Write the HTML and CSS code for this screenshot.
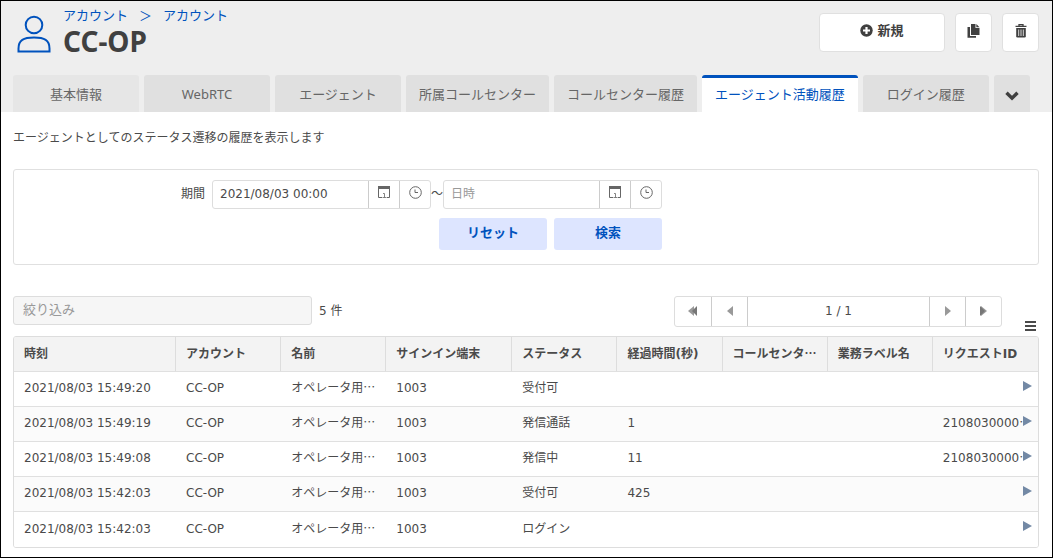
FILE: index.html
```html
<!DOCTYPE html>
<html lang="ja">
<head>
  <meta charset="UTF-8">
  <meta name="viewport" content="width=device-width, initial-scale=1.0">
  <title>CC-OP</title>
  <link rel="stylesheet" href="styles.css">
</head>
<body>
  <div class="page">
    <header class="header">
      <div class="header-top">
        <svg class="user-icon" width="34" height="38" viewBox="0 0 34 38" fill="none" stroke="currentColor" stroke-width="2">
          <circle cx="17" cy="10" r="8.3"/>
          <path d="M1.5 36.5 V33.5 C1.5 25 6.5 22.5 17 22.5 C27.5 22.5 32.5 25 32.5 33.5 V36.5 Z"/>
        </svg>
        <div class="heading">
          <nav class="breadcrumb">
            <a href="#">アカウント</a>
            <span class="separator">＞</span>
            <a href="#">アカウント</a>
          </nav>
          <h1>CC-OP</h1>
        </div>
        <div class="actions">
          <button class="action action-new">
            <svg width="13" height="13" viewBox="0 0 13 13">
              <circle cx="6.5" cy="6.5" r="6.2" fill="currentColor"/>
              <path d="M6.5 3 V10 M3 6.5 H10" stroke="#fff" stroke-width="2.2"/>
            </svg>
            新規
          </button>
          <button class="action" aria-label="複製">
            <svg width="13" height="14" viewBox="0 0 13 14" fill="currentColor">
              <path d="M4 0 H8.5 V4 H12.5 V11 H4 Z"/>
              <path d="M9.3 0 L12.5 3.2 H9.3 Z"/>
              <path d="M0.5 3 H3 V12 H9 V13.7 H0.5 Z"/>
            </svg>
          </button>
          <button class="action" aria-label="削除">
            <svg width="12" height="14" viewBox="0 0 12 14">
              <path d="M4 1.7 V0.6 H8 V1.7 M0.5 2.4 H11.5" fill="none" stroke="currentColor" stroke-width="1.3"/>
              <path d="M1.2 4 H10.8 V12.3 Q10.8 13.6 9.5 13.6 H2.5 Q1.2 13.6 1.2 12.3 Z" fill="currentColor"/>
              <path d="M3.7 5.5 V12 M6 5.5 V12 M8.3 5.5 V12" stroke="#fff" stroke-width="0.8"/>
            </svg>
          </button>
        </div>
      </div>

      <!-- Tabs -->
      <div class="tabs">
        <button class="tab tab-first">基本情報</button>
        <button class="tab">WebRTC</button>
        <button class="tab">エージェント</button>
        <button class="tab">所属コールセンター</button>
        <button class="tab">コールセンター履歴</button>
        <button class="tab active">エージェント活動履歴</button>
        <button class="tab">ログイン履歴</button>
        <button class="tab tab-more" aria-label="その他">
          <svg width="14" height="10" viewBox="0 0 14 10" fill="none" stroke="currentColor" stroke-width="3.4">
            <path d="M1.5 1.8 L7 7.2 L12.5 1.8"/>
          </svg>
        </button>
      </div>
    </header>

    <main class="content">
      <p class="description">エージェントとしてのステータス遷移の履歴を表示します</p>

      <form class="search-box">
        <div class="search-inner">
          <div class="period">
            <label for="from">期間</label>
            <div class="datetime">
              <input type="text" id="from" value="2021/08/03 00:00">
              <button type="button" aria-label="日付">
                <svg width="12" height="14" viewBox="0 0 12 14" fill="none" stroke="currentColor">
                  <path d="M0.5 1 V11.5 H4 M9 11.5 H11.5 V1"/>
                  <path d="M0 1.5 H12" stroke-width="3"/>
                  <path d="M5 7.5 H6.5 V11.5 M4.5 11.5 H8.5" stroke-width="0.8"/>
                </svg>
              </button>
              <button type="button" aria-label="時刻">
                <svg width="13" height="14" viewBox="0 0 13 14" fill="none" stroke="currentColor">
                  <circle cx="6.5" cy="6.5" r="5.8"/>
                  <path d="M6 3.5 V6.5 H9"/>
                </svg>
              </button>
            </div>
            <span class="tilde">～</span>
            <div class="datetime">
              <input type="text" placeholder="日時" aria-label="終了日時">
              <button type="button" aria-label="日付">
                <svg width="12" height="14" viewBox="0 0 12 14" fill="none" stroke="currentColor">
                  <path d="M0.5 1 V11.5 H4 M9 11.5 H11.5 V1"/>
                  <path d="M0 1.5 H12" stroke-width="3"/>
                  <path d="M5 7.5 H6.5 V11.5 M4.5 11.5 H8.5" stroke-width="0.8"/>
                </svg>
              </button>
              <button type="button" aria-label="時刻">
                <svg width="13" height="14" viewBox="0 0 13 14" fill="none" stroke="currentColor">
                  <circle cx="6.5" cy="6.5" r="5.8"/>
                  <path d="M6 3.5 V6.5 H9"/>
                </svg>
              </button>
            </div>
          </div>
          <div class="search-buttons">
            <button type="reset">リセット</button>
            <button type="button">検索</button>
          </div>
        </div>
      </form>

      <!-- Filter and pager -->
      <div class="toolbar">
        <input class="filter" type="text" placeholder="絞り込み" aria-label="絞り込み">
        <span class="count">5 件</span>
        <div class="pager">
          <button aria-label="最初">
            <svg width="10" height="10" viewBox="0 0 10 10"><path d="M6 0 V10 L0 5 Z" fill="#999"/><path d="M9 0 V10 L4 5 Z" fill="#777"/></svg>
          </button>
          <button aria-label="前へ">
            <svg width="6" height="10" viewBox="0 0 6 10"><path d="M6 0 V10 L0 5 Z" fill="#999"/></svg>
          </button>
          <span class="pager-page">1 / 1</span>
          <button aria-label="次へ">
            <svg width="6" height="10" viewBox="0 0 6 10"><path d="M0 0 V10 L6 5 Z" fill="#999"/></svg>
          </button>
          <button aria-label="最後">
            <svg width="10" height="10" viewBox="0 0 10 10"><path d="M2 0 V10 L8 5 Z" fill="#999"/><path d="M1 0 V10 L6 5 Z" fill="#777"/></svg>
          </button>
        </div>
        <button class="menu" aria-label="メニュー">
          <svg width="11" height="10" viewBox="0 0 11 10" stroke="currentColor" stroke-width="2">
            <path d="M0 1 H11 M0 5 H11 M0 9 H11"/>
          </svg>
        </button>
      </div>

      <div class="table-wrap">
        <table class="history">
          <thead>
            <tr>
              <th class="col-time">時刻</th>
              <th>アカウント</th>
              <th>名前</th>
              <th class="col-terminal">サインイン端末</th>
              <th>ステータス</th>
              <th>経過時間(秒)</th>
              <th>コールセンタ<span class="dots">…</span></th>
              <th>業務ラベル名</th>
              <th>リクエストID</th>
            </tr>
          </thead>
          <tbody>
            <tr>
              <td>2021/08/03 15:49:20</td>
              <td>CC-OP</td>
              <td>オペレータ用<span class="dots">…</span></td>
              <td>1003</td>
              <td>受付可</td>
              <td></td>
              <td></td>
              <td></td>
              <td><button class="detail" aria-label="詳細"></button></td>
            </tr>
            <tr>
              <td>2021/08/03 15:49:19</td>
              <td>CC-OP</td>
              <td>オペレータ用<span class="dots">…</span></td>
              <td>1003</td>
              <td>発信通話</td>
              <td>1</td>
              <td></td>
              <td></td>
              <td>2108030000<span class="dots">…</span><button class="detail" aria-label="詳細"></button></td>
            </tr>
            <tr>
              <td>2021/08/03 15:49:08</td>
              <td>CC-OP</td>
              <td>オペレータ用<span class="dots">…</span></td>
              <td>1003</td>
              <td>発信中</td>
              <td>11</td>
              <td></td>
              <td></td>
              <td>2108030000<span class="dots">…</span><button class="detail" aria-label="詳細"></button></td>
            </tr>
            <tr>
              <td>2021/08/03 15:42:03</td>
              <td>CC-OP</td>
              <td>オペレータ用<span class="dots">…</span></td>
              <td>1003</td>
              <td>受付可</td>
              <td>425</td>
              <td></td>
              <td></td>
              <td><button class="detail" aria-label="詳細"></button></td>
            </tr>
            <tr>
              <td>2021/08/03 15:42:03</td>
              <td>CC-OP</td>
              <td>オペレータ用<span class="dots">…</span></td>
              <td>1003</td>
              <td>ログイン</td>
              <td></td>
              <td></td>
              <td></td>
              <td><button class="detail" aria-label="詳細"></button></td>
            </tr>
          </tbody>
        </table>
      </div>
    </main>
  </div>
</body>
</html>
```
FILE: styles.css
```css
* {
  box-sizing: border-box;
}

body {
  margin: 0;
  font-family: "DejaVu Sans", "Noto Sans CJK JP", sans-serif;
  font-size: 12px;
  line-height: 20px;
  color: #4a4a4a;
  background-color: #fff;
}

button, input {
  font: inherit;
  color: inherit;
  margin: 0;
  padding: 0;
}

button {
  display: flex;
  align-items: center;
  justify-content: center;
  border: none;
  background: none;
  cursor: pointer;
}

.page {
  min-height: 100vh;
  border: 1px solid #000;
}

/* Header */
.header {
  padding: 3px 13px 0 12px;
  background-color: #eee;
}

.header-top {
  display: flex;
  align-items: flex-start;
}

.user-icon {
  margin: 11px 12px 0 4px;
  color: #0052bd;
}

.breadcrumb {
  display: flex;
  gap: 11px;
  font-size: 13px;
  line-height: 24px;
  color: #0052bd;
}

.breadcrumb a {
  color: inherit;
  text-decoration: none;
}

h1 {
  margin: 0;
  font-family: "Noto Sans", sans-serif;
  font-size: 28px;
  line-height: 26px;
  color: #404040;
}

.actions {
  display: flex;
  gap: 10px;
  margin: 9px 0 0 auto;
}

.action {
  width: 37px;
  height: 39px;
  padding-bottom: 4px;
  border: 1px solid #e0e0e0;
  border-radius: 4px;
  background-color: #fff;
  color: #404040;
}

.action-new {
  gap: 4px;
  width: 126px;
  font-size: 13px;
  font-weight: bold;
}

.tabs {
  display: flex;
  gap: 5px;
  margin-top: 21px;
}

.tab {
  min-width: 126px;
  height: 37px;
  padding: 0 13px;
  border-radius: 3px 3px 0 0;
  background-color: #e0e0e0;
  font-family: "Noto Sans", "Noto Sans CJK JP", sans-serif;
  font-size: 13px;
  color: #666;
  white-space: nowrap;
}

.tab-first {
  background-color: #e6e6e6;
}

.tab.active {
  border-top: 3px solid #0052bd;
  padding-bottom: 3px;
  background-color: #fff;
  color: #0052bd;
}

.tab-more {
  min-width: 36px;
  padding: 4px 0 0;
  color: #404040;
}

/* Content */
.content {
  padding: 16px 13px 8px 12px;
}

.description {
  margin: 0 0 21px;
}

.search-box {
  padding: 10px 0 14px 167px;
  border: 1px solid #e0e0e0;
  border-radius: 3px;
}

.search-inner {
  width: fit-content;
}

.period {
  display: flex;
  align-items: center;
}

.period label {
  margin-right: 7px;
  padding-bottom: 2px;
}

.datetime {
  display: flex;
  height: 29px;
  border: 1px solid #ddd;
  border-radius: 3px;
}

.datetime input {
  width: 155px;
  padding: 0 7px 2px;
  border: none;
  background: none;
}

.datetime button {
  width: 31px;
  padding-bottom: 3px;
  border-left: 1px solid #ccc;
  color: #666;
}

.tilde {
  padding-bottom: 2px;
}

::placeholder {
  color: #999;
  opacity: 1;
}

.search-buttons {
  display: flex;
  justify-content: flex-end;
  gap: 7px;
  margin-top: 9px;
}

.search-buttons button {
  width: 108px;
  height: 32px;
  padding-bottom: 3px;
  border-radius: 3px;
  background-color: #dde5ff;
  font-size: 13px;
  font-weight: bold;
  color: #0052bd;
}

.toolbar {
  display: flex;
  align-items: flex-start;
  height: 35px;
  margin: 31px 0 5px;
}

.filter {
  width: 299px;
  height: 29px;
  padding: 0 9px 2px;
  border: 1px solid #ddd;
  border-radius: 3px;
  background-color: #f6f6f6;
  font-size: 13px;
}

.count {
  margin-left: 7px;
  line-height: 30px;
}

.pager {
  display: flex;
  height: 31px;
  margin: 0 20px 0 auto;
  border: 1px solid #ddd;
  border-radius: 3px;
}

.pager button {
  width: 36px;
  padding-bottom: 1px;
}

.pager button + button,
.pager-page,
.pager-page ~ button {
  border-left: 1px solid #ccc;
}

.pager-page {
  width: 182px;
  line-height: 28px;
  text-align: center;
}

.menu {
  align-self: flex-end;
  width: 17px;
}

/* Table */
.table-wrap {
  border: 1px solid #ddd;
  border-radius: 3px;
  overflow: hidden;
}

.history {
  width: 100%;
  table-layout: fixed;
  border-spacing: 0;
}

.history th,
.history td {
  height: 35px;
  padding: 0 0 2px 10px;
  border-bottom: 1px solid #e0e0e0;
  text-align: left;
  white-space: nowrap;
}

.history th {
  padding-bottom: 0;
  border-right: 1px solid #ddd;
  background-color: #f3f3f3;
}

.history th:last-child {
  border-right: none;
}

.history td {
  background-color: #fff;
}

.history tr:nth-child(even) td {
  background-color: #fbfbfb;
}

.history tbody tr:last-child td {
  border-bottom: none;
}

.history td:last-child {
  position: relative;
}

.col-time {
  width: 162px;
}

.col-terminal {
  width: 126px;
}

.dots {
  font-family: "Noto Sans CJK JP", sans-serif;
  line-height: 0;
}

/* Arrow over the right end of the row */
.detail {
  position: absolute;
  top: 4px;
  right: 0;
  width: 15px;
  height: 20px;
  justify-content: flex-start;
  background-color: inherit;
}

.detail::before {
  content: "";
  border-style: solid;
  border-width: 5px 0 5px 9px;
  border-color: transparent transparent transparent #7389a5;
}
```
